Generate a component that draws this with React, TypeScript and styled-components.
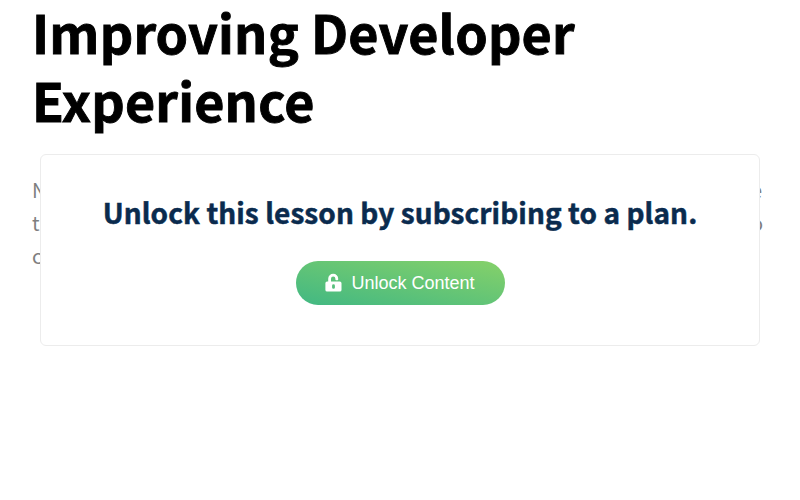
import React from "react";
import styled, { createGlobalStyle } from "styled-components";

const GlobalStyle = createGlobalStyle`
  * { box-sizing: border-box; }
  body { margin: 0; background: #fff; overflow: hidden; }
`;

const Page = styled.main`
  position: relative;
  width: 800px;
  height: 500px;
  overflow: hidden;
  background: #fff;
  font-family: "Noto Sans CJK JP", sans-serif;
`;

const Title = styled.h1`
  margin: -2px 200px 0 32px;
  font-size: 52px;
  line-height: 68px;
  font-weight: 700;
  letter-spacing: 0.2px;
  -webkit-text-stroke: 0.9px #000;
  color: #000;
`;

const Excerpt = styled.div`
  display: flex;
  flex-direction: column;
  margin: 39px 37px 0 32px;
  font-size: 20px;
  line-height: 33px;
  color: #7f7f7f;
`;

const Line = styled.div<{ $inset?: number }>`
  display: flex;
  justify-content: space-between;
  padding-right: ${({ $inset = 0 }) => $inset}px;
`;

const Card = styled.section`
  position: absolute;
  top: 154px;
  left: 40px;
  width: 720px;
  height: 192px;
  display: flex;
  flex-direction: column;
  align-items: center;
  padding-top: 36px;
  border: 1px solid #ececec;
  border-radius: 6px;
  background: #fff;
`;

const Heading = styled.h2`
  margin: 0;
  font-size: 28px;
  line-height: 42px;
  font-weight: 700;
  letter-spacing: 0.07px;
  -webkit-text-stroke: 0.5px #0a2b4e;
  color: #0a2b4e;
  white-space: nowrap;
`;

const Button = styled.button`
  display: flex;
  align-items: center;
  justify-content: center;
  gap: 9px;
  width: 209px;
  height: 44px;
  margin-top: 28px;
  padding: 0;
  border: 0;
  border-radius: 22px;
  background: linear-gradient(to top right, #41b883, #86d169);
  color: #fff;
  font: 18px "Liberation Sans", Arial, sans-serif;
`;

const Icon = styled.svg`
  flex: none;
  margin-bottom: 2px;
`;

const LockIcon = () => (
  <Icon width="17" height="19" viewBox="0 0 17 19" fill="currentColor">
    <path
      fillRule="evenodd"
      d="M3.2 8.5V5.7a5 5 0 0 1 10 0v.7a.8.8 0 0 1-.8.8h-1.2a.8.8 0 0 1-.8-.8v-.7a2.2 2.2 0 0 0-4.4 0v2.8h8.8A1.7 1.7 0 0 1 16.5 10.2v6.7a1.7 1.7 0 0 1-1.7 1.7H2.1A1.7 1.7 0 0 1 .4 16.9v-6.7a1.7 1.7 0 0 1 1.7-1.7zM8.5 11.3a1.4 1.4 0 0 0-1.4 1.4v1.7a1.4 1.4 0 0 0 2.8 0v-1.7a1.4 1.4 0 0 0-1.4-1.4z"
    />
  </Icon>
);

export default function App() {
  return (
    <Page>
      <GlobalStyle />
      <Title>Improving Developer Experience</Title>
      <Excerpt>
        <Line $inset={1}><span>N</span><span>e</span></Line>
        <Line><span>t</span><span>o</span></Line>
        <Line><span>c</span></Line>
      </Excerpt>
      <Card>
        <Heading>Unlock this lesson by subscribing to a plan.</Heading>
        <Button>
          <LockIcon />
          <span>Unlock Content</span>
        </Button>
      </Card>
    </Page>
  );
}
